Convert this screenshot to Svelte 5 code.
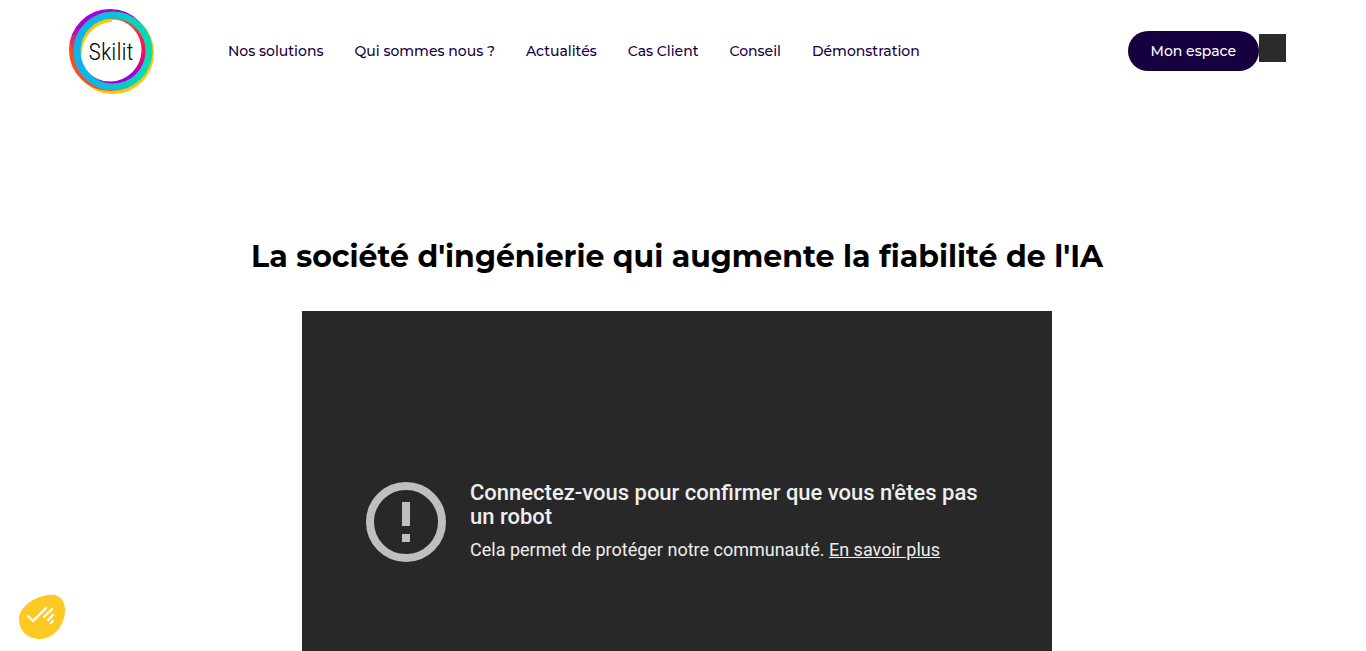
<script>
  const links = [
    'Nos solutions',
    'Qui sommes nous ?',
    'Actualités',
    'Cas Client',
    'Conseil',
    'Démonstration',
  ]
</script>

<div class="page">
  <header>
    <a class="logo" href="#accueil" aria-label="Skilit">
      <svg viewBox="0 0 86 88" width="86" height="88">
        <defs>
          <linearGradient id="warm" x1="0" y1="0" x2="0" y2="1">
            <stop offset="0.2" stop-color="#a800d0" />
            <stop offset="0.5" stop-color="#ff4a1c" />
          </linearGradient>
          <linearGradient id="pink" x1="0" y1="0" x2="0" y2="1">
            <stop offset="0.1" stop-color="#ff3b2f" />
            <stop offset="0.6" stop-color="#f7006e" />
            <stop offset="0.85" stop-color="#a000d8" />
          </linearGradient>
          <linearGradient id="cool" x1="0" y1="0" x2="1" y2="0">
            <stop offset="0.1" stop-color="#0cb4ee" />
            <stop offset="0.5" stop-color="#12bfd0" />
            <stop offset="1" stop-color="#0bdcb0" />
          </linearGradient>
        </defs>
        <circle cx="45" cy="46" r="37" stroke="#fcc60c" stroke-width="8" />
        <circle cx="42" cy="43" r="38.5" stroke="url(#warm)" stroke-width="5" />
        <circle cx="42" cy="43" r="34" stroke="url(#pink)" stroke-width="5" />
        <path d="M12.5 47A33 33 0 0 1 44 13.5" stroke="#fcc60c" stroke-width="3" />
        <circle cx="45" cy="44" r="36" stroke="url(#cool)" stroke-width="7" />
        <text x="43" y="53" text-anchor="middle">Skilit</text>
      </svg>
    </a>
    <nav>
      {#each links as link}
        <a href="#menu">{link}</a>
      {/each}
    </nav>
    <div class="account">
      <a class="button" href="#espace">Mon espace</a>
      <span class="square"></span>
    </div>
  </header>

  <main>
    <h1>La société d'ingénierie qui augmente la fiabilité de l'IA</h1>
    <section class="video">
      <svg viewBox="0 0 80 80" width="80" height="80" aria-hidden="true">
        <circle cx="40" cy="40" r="36" fill="none" stroke="#bfbfbf" stroke-width="8" />
        <path d="M36 20h8v24h-8zM36 52h8v8h-8z" fill="#bfbfbf" />
      </svg>
      <div class="message">
        <h2>Connectez-vous pour confirmer que vous n'êtes pas un robot</h2>
        <p>Cela permet de protéger notre communauté. <a href="#aide">En savoir plus</a></p>
      </div>
    </section>
  </main>
</div>

<button class="consent" aria-label="Gérer les cookies">
  <svg viewBox="0 0 48 46" width="48" height="46">
    <path
      d="M30 1C41 -1 47 6 47 16C47 31 36 45 22 45C9 45 1 36 1 25C1 14 15 3 30 1Z"
      fill="#ffc823"
    />
    <path
      d="M10 22L15 27L28 14M26 23L34 15M30 26L35 21M33 29L35 27"
      fill="none"
      stroke="#fff"
      stroke-width="2.4"
      stroke-linecap="round"
      stroke-linejoin="round"
    />
  </svg>
</button>

<style>
  :global(body) {
    margin: 0;
    background: #fff;
  }
  .page {
    box-sizing: border-box;
    height: 100vh;
    padding-right: 12px;
    overflow-y: auto;
    scrollbar-width: none;
    font-family: Montserrat, Inter, sans-serif;
  }
  header {
    display: flex;
    align-items: center;
    height: 102px;
    padding: 0 68px;
  }
  .logo {
    display: flex;
    flex: none;
    margin-right: 74px;
  }
  .logo circle,
  .logo path {
    fill: none;
  }
  .logo text {
    font-family: 'Roboto Condensed', Roboto, sans-serif;
    font-size: 24px;
    font-weight: 300;
  }
  nav {
    display: flex;
    gap: 31px;
  }
  nav a {
    color: #17003f;
    font-size: 14px;
    font-weight: 500;
    line-height: 20px;
    text-decoration: none;
    white-space: nowrap;
  }
  .account {
    display: flex;
    align-items: center;
    margin-left: auto;
  }
  .button {
    padding: 10px 23px;
    border-radius: 20px;
    background: #17003f;
    color: #fff;
    font-size: 14px;
    font-weight: 500;
    line-height: 20px;
    text-decoration: none;
    white-space: nowrap;
  }
  .square {
    width: 27px;
    height: 28px;
    margin-bottom: 6px;
    background: #2b2b2b;
  }
  main {
    padding: 135px 16px 0;
  }
  h1 {
    margin: 0 0 34px;
    font-size: 30px;
    font-weight: 700;
    line-height: 40px;
    text-align: center;
  }
  .video {
    display: flex;
    align-items: center;
    gap: 24px;
    box-sizing: border-box;
    max-width: 750px;
    aspect-ratio: 16 / 9;
    margin: 0 auto;
    padding: 0 64px;
    background: #282828;
    color: #eee;
    font-family: Roboto, sans-serif;
  }
  .video svg {
    flex: none;
  }
  h2 {
    margin: 0 0 8px;
    font-size: 22px;
    font-weight: 500;
    line-height: 24px;
  }
  p {
    margin: 0;
    font-size: 18px;
    line-height: 26px;
  }
  p a {
    color: inherit;
  }
  .consent {
    position: fixed;
    bottom: 11px;
    left: 18px;
    display: flex;
    padding: 0;
    border: none;
    background: none;
    cursor: pointer;
  }
</style>
